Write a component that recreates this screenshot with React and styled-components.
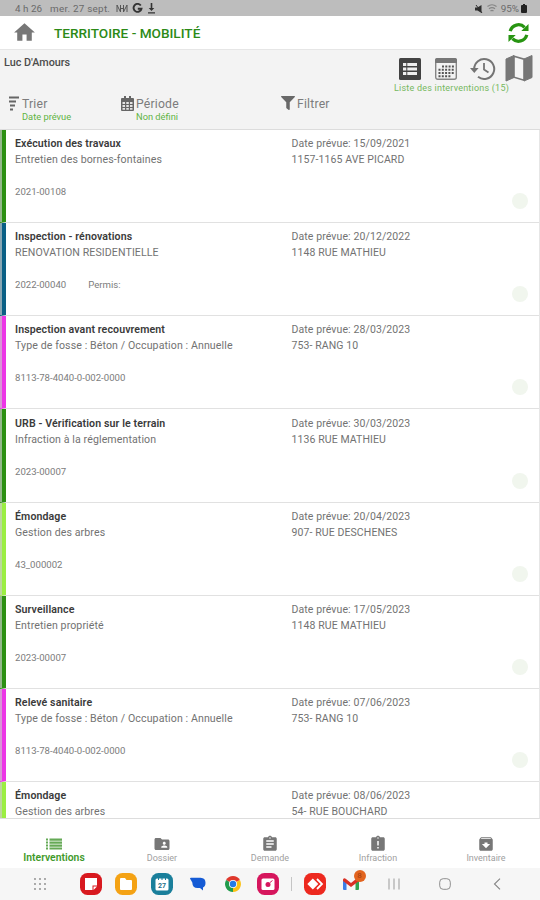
import React from "react";
import styled, { createGlobalStyle } from "styled-components";
import { MdFolderShared, MdAssignment, MdAssignmentLate, MdArchive, MdHome } from "react-icons/md";
import { FaFilter } from "react-icons/fa";

const Global = createGlobalStyle`
  * { box-sizing: border-box; }
  body { margin: 0; background: #fff; font-family: Roboto, "Liberation Sans", sans-serif; }
  svg { display: block; flex: none; }
`;

const Screen = styled.main`
  width: 540px; height: 900px; display: flex; flex-direction: column; overflow: hidden; background: #fff;
`;
const StatusBar = styled.div`
  height: 16px; flex: none; display: flex; align-items: center; justify-content: space-between;
  background: #bdbdbd; color: #6a6a6a; font-size: 9.9px; line-height: 16px; padding: 1px 13px 0 15px; white-space: pre;
`;
const StatusGroup = styled.div`display: flex; align-items: center; gap: ${(p) => p.$gap}px;`;
const StatusText = styled.span`
  letter-spacing: ${(p) => p.$track || 0}px; margin-right: ${(p) => p.$after || 0}px;
`;
const Header = styled.header`
  height: 33px; flex: none; display: flex; align-items: center; padding: 0 11px 0 12px; color: #777; background: #fff;
`;
const Title = styled.h1`
  flex: 1; margin: 1px 0 0 17px; font-size: 13.6px; line-height: 16px; font-weight: 500; color: #2c8a17;
`;
const Tools = styled.section`
  height: 81px; flex: none; background: #f3f3f3; border-top: 1px solid #e6e6e6; border-bottom: 1px solid #dcdcdc;
`;
const TopRow = styled.div`
  height: 47px; display: flex; justify-content: space-between; padding: 0 5px 0 4px;
`;
const User = styled.div`
  margin-top: 6px; font-size: 10.8px; line-height: 14px; font-weight: 500; color: #4c4c4c;
`;
const Views = styled.div`width: 141px; padding-top: 4px; color: #6b6b6b;`;
const ViewIcons = styled.div`
  height: 29px; display: grid; grid-template-columns: 36px 35px 35px 28px; align-items: center; padding-left: 5px;
`;
const ViewLabel = styled.div`
  font-size: 9px; line-height: 11px; letter-spacing: 0.22px; color: #76b85f; white-space: nowrap;
`;
const Filters = styled.div`
  height: 32px; display: grid; grid-template-columns: 113px 160px 1fr; padding-left: 8px; color: #7c7c7c;
`;
const Filter = styled.div`display: flex; gap: 2px;`;
const FilterIcon = styled.div`color: #686868; margin-top: -1px;`;
const FilterText = styled.div`font-size: 12.2px; line-height: 15px; letter-spacing: 0.2px;`;
const FilterValue = styled.div`
  margin: -1px 0 0 0; font-size: 9.3px; line-height: 11px; letter-spacing: 0; color: #5fb343;
`;
const List = styled.div`
  height: 689px; flex: none; overflow: hidden; border-bottom: 1px solid #ddd; border-right: 1px solid #e6e6e6;
`;
const Row = styled.article`
  height: 93.14px; display: grid; grid-template-columns: 276.5px 1fr; position: relative;
  border-left: 6px solid ${(p) => p.$color}; border-bottom: 1px solid #e1e1e1; padding: 6.2px 0 0 9px; color: #727272;
`;
const Edge = styled.span`
  position: absolute; left: -6px; top: 0; bottom: 0; width: 2px; background: rgba(205, 205, 205, 0.65);
`;
const Line = styled.div`
  font-size: 10.6px; line-height: 16px; letter-spacing: 0.1px; white-space: nowrap;
`;
const Kind = styled(Line)`font-weight: 600; color: #3a3a3a;`;
const Appointment = styled(Line)`font-size: 10.5px;`;
const Reference = styled.div`
  margin-top: 16px; font-size: 9.6px; line-height: 15px; display: flex; gap: 22px; color: #7c7c7c;
`;
const Dot = styled.span`
  position: absolute; right: 11px; bottom: 13px; width: 16px; height: 16px; border-radius: 50%; background: #f1f6ee;
`;
const Tabs = styled.nav`
  height: 49px; flex: none; display: grid; grid-template-columns: repeat(5, 1fr); padding-top: 16px; background: #fff;
`;
const Tab = styled.div`
  display: flex; flex-direction: column; align-items: center; color: ${(p) => (p.$active ? "#65a956" : "#777")};
`;
const TabLabel = styled.span`
  font-size: ${(p) => (p.$active ? 10.4 : 9)}px; line-height: 10px;
  font-weight: ${(p) => (p.$active ? 600 : 400)}; color: ${(p) => (p.$active ? "#3f9a2b" : "#a0a0a0")};
`;
const Dock = styled.div`
  height: 32px; flex: none; display: flex; align-items: center; background: #f6f6f6; padding-left: 28.5px;
`;
const DockItem = styled.div`
  width: 22px; height: 32px; flex: none; margin-left: ${(p) => p.$gap}px;
  display: flex; align-items: center; justify-content: center; position: relative;
`;
const Badge = styled.span`
  position: absolute; left: 14px; top: 2px; width: 12px; height: 12px; border-radius: 50%; background: #e2641f;
  color: #a03c10; font-size: 8px; line-height: 12px; text-align: center;
`;
const Divider = styled.span`width: 1px; height: 14px; background: #c5c5c5;`;

const BowIcon = () => (
  <svg width="12" height="9" viewBox="0 0 12 9" fill="none" stroke="#555">
    <path d="M1 8V1l3.500 7V1M11 8V1L7.500 8V1M4.500 4.500h3" />
  </svg>
);
const GIcon = () => (
  <svg width="11" height="11" viewBox="0 0 11 11" fill="none" stroke="#333" strokeWidth="1.9">
    <path d="M8.8 2.5A4 4 0 1 0 9.5 5.7H5.8" />
  </svg>
);
const DownloadIcon = () => (
  <svg width="9" height="11" viewBox="0 0 9 11" fill="#333">
    <path d="M3.7 0h1.6v5h2L4.5 8 1.7 5h2zM1 9.3h7v1.3H1z" />
  </svg>
);
const MuteIcon = () => (
  <svg width="8" height="8" viewBox="0 0 8 8">
    <path d="M0 2.500h2.500L6.500 0v8L2.500 5.500H0z" fill="#2f2f2f" /><path d="M1 0l6 8" stroke="#2f2f2f" />
  </svg>
);
const WifiIcon = () => (
  <svg width="10" height="9" viewBox="0 0 10 9" fill="none" stroke="#858585" strokeWidth="1.2">
    <path d="M.5 2.500q4.500-3.500 9 0M2 4.800q3-2.300 6 0M3.500 7q1.500-1.300 3 0" />
  </svg>
);
const BatteryIcon = () => (
  <svg width="6" height="9" viewBox="0 0 6 9"><path d="M1 1h1V0h2v1h1q1 0 1 1v6q0 1-1 1H1Q0 9 0 8V2q0-1 1-1z" fill="#222" /></svg>
);
const RefreshIcon = () => (
  <svg width="21" height="22" viewBox="0 0 22 22" fill="none" stroke="#279411" strokeWidth="3.4">
    <path d="M2.3 9A9 9 0 0 1 17.4 5.1M19.7 13A9 9 0 0 1 4.6 16.9" />
    <path d="M21.5 1.5V9h-7.600zM.5 20.500V13h7.600z" fill="#279411" stroke="none" />
  </svg>
);
const ListViewIcon = () => (
  <svg width="22" height="22" viewBox="0 0 22 22">
    <rect width="22" height="22" rx="1.500" fill="#424242" />
    <path d="M4 5h3.300v3H4zM8.300 5H18v3H8.300zM4 9.500h3.300v3H4zM8.300 9.500H18v3H8.300zM4 14h3.300v3H4zM8.300 14H18v3H8.300z" fill="#eee" />
  </svg>
);
const CalendarViewIcon = () => (
  <svg width="22" height="22" viewBox="0 0 22 22">
    <rect x=".7" y=".7" width="20.600" height="20.600" rx="2" fill="#f3f3f3" stroke="#858585" strokeWidth="1.400" />
    <path d="M0 5V2Q0 0 2 0h18q2 0 2 2v3z" fill="#777" />
    <path d="M7 8.500h12M3.500 11.800H19M3.500 15.100H19M3.500 18.300h12" stroke="#555" strokeWidth="2" strokeDasharray="2 1.300" />
  </svg>
);
const HistoryIcon = () => (
  <svg width="26" height="24" viewBox="0 0 26 24" fill="none" stroke="#747474" strokeWidth="2">
    <path d="M4.200 12A10 10 0 1 1 8 19.800" />
    <path d="M14 6v6.500l4.500 3" strokeWidth="1.800" />
    <path d="M0 11h8.600l-4.300 5z" fill="#747474" stroke="none" />
  </svg>
);
const MapIcon = () => (
  <svg width="28" height="27" viewBox="0 0 28 27">
    <path d="M1 4l8-3.500v22L1 26zM19 4l8-3.500v22L19 26z" fill="#777" stroke="#777" />
    <path d="M9 1.200l10 3v21l-10-3z" fill="#f5f5f5" stroke="#777" strokeWidth="1.600" />
  </svg>
);
const SortIcon = () => (
  <svg width="12" height="15" viewBox="0 0 12 15" stroke="#666" strokeWidth="2">
    <path d="M1 1.500h10M1 5.500h7M2 9.500h5M2 13.500h3" />
  </svg>
);
const PeriodIcon = () => (
  <svg width="13" height="15" viewBox="0 0 13 15">
    <path d="M0 3q0-1 1-1h2V0h2v2h3V0h2v2h2q1 0 1 1v11q0 1-1 1H1q-1 0-1-1z" fill="#666" />
    <path d="M1.500 6h2.500v2H1.500zM5.300 6h2.500v2H5.300zM9 6h2.500v2H9zM1.500 9h2.500v2H1.500zM5.300 9h2.500v2H5.300zM9 9h2.500v2H9zM1.500 12h2.500v1.700H1.500zM5.300 12h2.500v1.700H5.300zM9 12h2.500v1.700H9z" fill="#e4e4e4" />
  </svg>
);
const TaskListIcon = () => (
  <svg width="18" height="18" viewBox="0 0 18 18" fill="currentColor">
    <path d="M1 3.500h2v2H1zM1 6.500h2v2H1zM1 9.500h2v2H1zM1 12.500h2v2H1zM4.500 3.500H17v2.200H4.500zM4.500 6.500H17v2.200H4.500zM4.500 9.500H17v2.200H4.500zM4.500 12.500H17v2H4.500z" />
  </svg>
);

const AppTile = ({ color, children }) => (
  <svg width="22" height="22" viewBox="0 0 22 22"><rect width="22" height="22" rx="7.500" fill={color} />{children}</svg>
);
const GridIcon = () => (
  <svg width="12" height="12" viewBox="0 0 12 12" fill="#888">
    {[1, 6, 11].flatMap((y) => [1, 6, 11].map((x) => <circle key={`${x}-${y}`} cx={x} cy={y} r=".9" />))}
  </svg>
);
const NotesIcon = () => (
  <AppTile color="#d8191f"><path d="M5 5h12v7.500h-4.500V17H5z" fill="#fff" /><path d="M13.500 17v-3.500H17z" fill="#fff" /></AppTile>
);
const FolderIcon = () => (
  <AppTile color="#f4a214"><path d="M5 6q0-1 1-1h4l1.500 2H16q1 0 1 1v8q0 1-1 1H6q-1 0-1-1z" fill="#fff" /></AppTile>
);
const DateIcon = () => (
  <AppTile color="#1a7f9b">
    <rect x="4.500" y="5.500" width="13" height="12" rx="1.500" fill="#fff" />
    <path d="M7.500 4v3M11 4v3M14.500 4v3" stroke="#1a7f9b" />
    <text x="11" y="14.500" fontSize="7" fontWeight="700" textAnchor="middle" fill="#1a6f88">27</text>
  </AppTile>
);
const MessageIcon = () => (
  <svg width="16" height="14" viewBox="0 0 16 14">
    <path d="M0 1.500Q0 .8 1 .8h9.500Q15.500 1 15.500 5.800 15.500 9.500 13 10.500V13.500L10 11H7.500Q2.500 11 2.300 5.500z" fill="#155bd5" />
  </svg>
);
const ChromeIcon = () => (
  <svg width="16" height="16" viewBox="0 0 16 16">
    <path d="M8 8L1.100 4A8 8 0 0 1 14.900 4z" fill="#df382c" />
    <path d="M8 8l6.900-4A8 8 0 0 1 8 16z" fill="#fbc116" />
    <path d="M8 8v8A8 8 0 0 1 1.100 4z" fill="#219b4b" />
    <circle cx="8" cy="8" r="4" fill="#fff" /><circle cx="8" cy="8" r="3.200" fill="#247be6" />
  </svg>
);
const CameraIcon = () => (
  <AppTile color="#d6165d">
    <rect x="4.500" y="5.500" width="13" height="11.500" rx="1.500" fill="#fff" />
    <circle cx="11" cy="11.500" r="2.500" fill="#d6165d" /><path d="M13 9.500l2.500-2" stroke="#d6165d" />
  </AppTile>
);
const RemoteIcon = () => (
  <AppTile color="#ed291f"><path d="M8.800 5.500l5.500 5.500-5.500 5.500L3.300 11z" fill="#fff" /><path d="M13 6l5 5-5 5" stroke="#fff" strokeWidth="1.800" fill="none" /></AppTile>
);
const GmailIcon = () => (
  <svg width="16" height="12" viewBox="0 0 16 12">
    <path d="M0 2l3.500 2.500V12H1q-1 0-1-1z" fill="#3b7de8" /><path d="M16 2l-3.500 2.500V12H15q1 0 1-1z" fill="#31a350" />
    <path d="M0 3V1.500Q1-.5 3 1l5 4 5-4q2-1.500 3 .5V3L8 9z" fill="#d93025" />
  </svg>
);
const RecentsIcon = () => (
  <svg width="12" height="12" viewBox="0 0 12 12" stroke="#9a9a9a"><path d="M1 .5v11M6 .5v11M11 .5v11" /></svg>
);
const HomeKeyIcon = () => (
  <svg width="12" height="12" viewBox="0 0 12 12" fill="none" stroke="#8f8f8f"><rect x=".7" y=".7" width="10.600" height="10.600" rx="3.500" /></svg>
);
const BackIcon = () => (
  <svg width="8" height="12" viewBox="0 0 8 12" fill="none" stroke="#858585" strokeWidth="1.100"><path d="M7 .7L1.500 6 7 11.300" /></svg>
);

const rows = [
  ["#2c8f12", "Exécution des travaux", "Entretien des bornes-fontaines", "2021-00108", "15/09/2021", "1157-1165 AVE PICARD"],
  ["#0a5f85", "Inspection - rénovations", "RENOVATION RESIDENTIELLE", "2022-00040", "20/12/2022", "1148 RUE MATHIEU", "Permis:"],
  ["#ec35e6", "Inspection avant recouvrement", "Type de fosse : Béton / Occupation : Annuelle", "8113-78-4040-0-002-0000", "28/03/2023", "753- RANG 10"],
  ["#2c8f12", "URB - Vérification sur le terrain", "Infraction à la réglementation", "2023-00007", "30/03/2023", "1136 RUE MATHIEU"],
  ["#9bee42", "Émondage", "Gestion des arbres", "43_000002", "20/04/2023", "907- RUE DESCHENES"],
  ["#2c8f12", "Surveillance", "Entretien propriété", "2023-00007", "17/05/2023", "1148 RUE MATHIEU"],
  ["#ec35e6", "Relevé sanitaire", "Type de fosse : Béton / Occupation : Annuelle", "8113-78-4040-0-002-0000", "07/06/2023", "753- RANG 10"],
  ["#9bee42", "Émondage", "Gestion des arbres", "", "08/06/2023", "54- RUE BOUCHARD"],
];
const tabs = [
  ["Interventions", TaskListIcon], ["Dossier", MdFolderShared], ["Demande", MdAssignment],
  ["Infraction", MdAssignmentLate], ["Inventaire", MdArchive],
];
const dock = [
  [0, GridIcon], [29, NotesIcon], [13.5, FolderIcon], [14, DateIcon], [13.5, MessageIcon], [13, ChromeIcon],
  [13.5, CameraIcon], [1.5, Divider], [1.5, RemoteIcon], [13.5, GmailIcon, "8"], [21.5, RecentsIcon],
  [29, HomeKeyIcon], [29.5, BackIcon],
];

export default function App() {
  return (
    <Screen>
      <Global />
      <StatusBar>
        <StatusGroup $gap={4}>
          <StatusText $after={4}>4 h 26</StatusText>
          <StatusText $after={2} $track={0.25}>mer. 27 sept.</StatusText>
          <BowIcon /><GIcon /><DownloadIcon />
        </StatusGroup>
        <StatusGroup $gap={4}><MuteIcon /><WifiIcon /><StatusText $after={-2}>95%</StatusText><BatteryIcon /></StatusGroup>
      </StatusBar>
      <Header><MdHome size={25} /><Title>TERRITOIRE - MOBILITÉ</Title><RefreshIcon /></Header>
      <Tools>
        <TopRow>
          <User>Luc D'Amours</User>
          <Views>
            <ViewIcons><ListViewIcon /><CalendarViewIcon /><HistoryIcon /><MapIcon /></ViewIcons>
            <ViewLabel>Liste des interventions (15)</ViewLabel>
          </Views>
        </TopRow>
        <Filters>
          <Filter><FilterIcon><SortIcon /></FilterIcon><FilterText>Trier<FilterValue>Date prévue</FilterValue></FilterText></Filter>
          <Filter><FilterIcon><PeriodIcon /></FilterIcon><FilterText>Période<FilterValue>Non défini</FilterValue></FilterText></Filter>
          <Filter><FilterIcon><FaFilter size={14} /></FilterIcon><FilterText>Filtrer</FilterText></Filter>
        </Filters>
      </Tools>
      <List>
        {rows.map(([color, kind, detail, ref, date, place, extra], i) => (
          <Row key={i} $color={color}>
            <Edge />
            <div>
              <Kind>{kind}</Kind><Line>{detail}</Line>
              <Reference><span>{ref}</span>{extra && <span>{extra}</span>}</Reference>
            </div>
            <div><Appointment>Date prévue: {date}</Appointment><Appointment>{place}</Appointment></div>
            <Dot />
          </Row>
        ))}
      </List>
      <Tabs>
        {tabs.map(([label, Icon], i) => (
          <Tab key={label} $active={i === 0}><Icon size={18} /><TabLabel $active={i === 0}>{label}</TabLabel></Tab>
        ))}
      </Tabs>
      <Dock>
        {dock.map(([gap, Icon, badge], i) => (
          <DockItem key={i} $gap={gap}><Icon />{badge && <Badge>{badge}</Badge>}</DockItem>
        ))}
      </Dock>
    </Screen>
  );
}
